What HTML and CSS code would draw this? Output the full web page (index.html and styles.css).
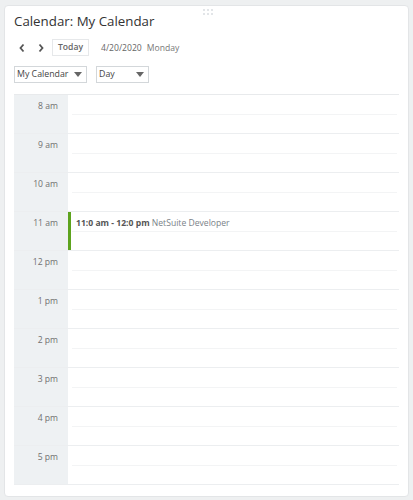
FILE: index.html
```html
<!DOCTYPE html>
<html>
<head>
<meta charset="utf-8">
<link rel="stylesheet" href="styles.css">
</head>
<body>
<div class="card">
  <div class="handle"><span></span><span></span><span></span><span></span><span></span><span></span></div>
  <h1 class="title">Calendar: My Calendar</h1>
  <div class="nav">
    <span class="arrow">
      <svg width="8" height="10" viewBox="0 0 8 10"><path d="M5.5 1.5 L2.5 5 L5.5 8.5" fill="none" stroke="#555" stroke-width="1.8"/></svg>
    </span>
    <span class="arrow">
      <svg width="8" height="10" viewBox="0 0 8 10"><path d="M2.5 1.5 L5.5 5 L2.5 8.5" fill="none" stroke="#555" stroke-width="1.8"/></svg>
    </span>
    <span class="today">Today</span>
    <span class="date">4/20/2020</span>
    <span class="day">Monday</span>
  </div>
  <div class="selects">
    <div class="select sel-cal">My Calendar<span class="caret"></span></div>
    <div class="select sel-day">Day<span class="caret"></span></div>
  </div>
  <div class="grid">
    <div class="row"><div class="time">8 am</div><div class="slot"><div class="half"></div></div></div>
    <div class="row"><div class="time">9 am</div><div class="slot"><div class="half"></div></div></div>
    <div class="row"><div class="time">10 am</div><div class="slot"><div class="half"></div></div></div>
    <div class="row"><div class="time">11 am</div><div class="slot"><div class="half"></div>
      <div class="event"><b>11:0 am - 12:0 pm</b> NetSuite Developer</div></div></div>
    <div class="row"><div class="time">12 pm</div><div class="slot"><div class="half"></div></div></div>
    <div class="row"><div class="time">1 pm</div><div class="slot"><div class="half"></div></div></div>
    <div class="row"><div class="time">2 pm</div><div class="slot"><div class="half"></div></div></div>
    <div class="row"><div class="time">3 pm</div><div class="slot"><div class="half"></div></div></div>
    <div class="row"><div class="time">4 pm</div><div class="slot"><div class="half"></div></div></div>
    <div class="row"><div class="time">5 pm</div><div class="slot"><div class="half"></div></div></div>
  </div>
</div>
</body>
</html>
```
FILE: styles.css
```css
html, body {
  margin: 0;
  padding: 0;
}
body {
  background: #eef0f1;
  font-family: "Open Sans", "Liberation Sans", sans-serif;
  width: 413px;
  height: 500px;
  overflow: hidden;
}
.card {
  position: relative;
  margin: 5px 4px 0 4px;
  height: 492px;
  background: #fff;
  border: 1px solid #e3e5e7;
  border-radius: 4px;
  box-sizing: border-box;
  padding: 7px 9px 0 9px;
}
.handle {
  position: absolute;
  top: 3px;
  left: 198px;
  width: 12px;
  display: grid;
  grid-template-columns: repeat(3, 2px);
  gap: 2px 2px;
}
.handle span {
  width: 2px;
  height: 2px;
  background: #e2e5e8;
  display: block;
}
.title {
  margin: 0;
  font-size: 13.3px;
  font-weight: 400;
  color: #333;
  line-height: 17px;
}
.nav {
  display: flex;
  align-items: center;
  margin-top: 9px;
  height: 17px;
  font-size: 8.6px;
  color: #666;
}
.arrow {
  width: 8px;
  height: 10px;
  display: flex;
  margin-left: 4px;
  margin-right: 7px;
}
.arrow + .arrow {
  margin-left: 4px;
  margin-right: 0;
}
.today {
  margin-left: 7px;
  border: 1px solid #e6e8ea;
  height: 15px;
  line-height: 15px;
  padding: 0 5px;
  font-weight: 600;
  color: #666;
}
.date {
  margin-left: 12px;
  color: #666;
}
.day {
  margin-left: 5px;
  color: #777;
}
.selects {
  display: flex;
  gap: 9px;
  margin-top: 10px;
}
.select {
  position: relative;
  height: 17px;
  box-sizing: border-box;
  border: 1px solid #d3d7da;
  font-size: 8.8px;
  color: #444;
  line-height: 15px;
  padding-left: 2px;
}
.sel-cal { width: 73px; }
.sel-day { width: 53px; }
.caret {
  position: absolute;
  right: 4px;
  top: 5px;
  width: 0;
  height: 0;
  border-left: 4.5px solid transparent;
  border-right: 4.5px solid transparent;
  border-top: 5px solid #666;
}
.grid {
  margin-top: 11px;
  width: 385px;
  border-top: 1px solid #e8eaec;
}
.row {
  display: flex;
  height: 39px;
  border-bottom: 1px solid #eceef0;
  box-sizing: border-box;
}
.time {
  width: 54px;
  flex: none;
  background: #eef1f3;
  font-size: 8.6px;
  color: #707070;
  text-align: right;
  padding-right: 10px;
  box-sizing: border-box;
  padding-top: 4px;
  line-height: 14px;
}
.slot {
  position: relative;
  flex: 1;
}
.half {
  position: absolute;
  left: 4px;
  right: 2px;
  top: 19px;
  border-top: 1px solid #f3f4f5;
}
.event {
  position: absolute;
  left: 0;
  top: 0;
  bottom: 0;
  right: 0;
  border-left: 3px solid #5da31e;
  padding-left: 5px;
  font-size: 8.6px;
  color: #7a8288;
  line-height: 14px;
  padding-top: 4px;
}
.event b {
  color: #555;
  font-weight: 700;
}
```
